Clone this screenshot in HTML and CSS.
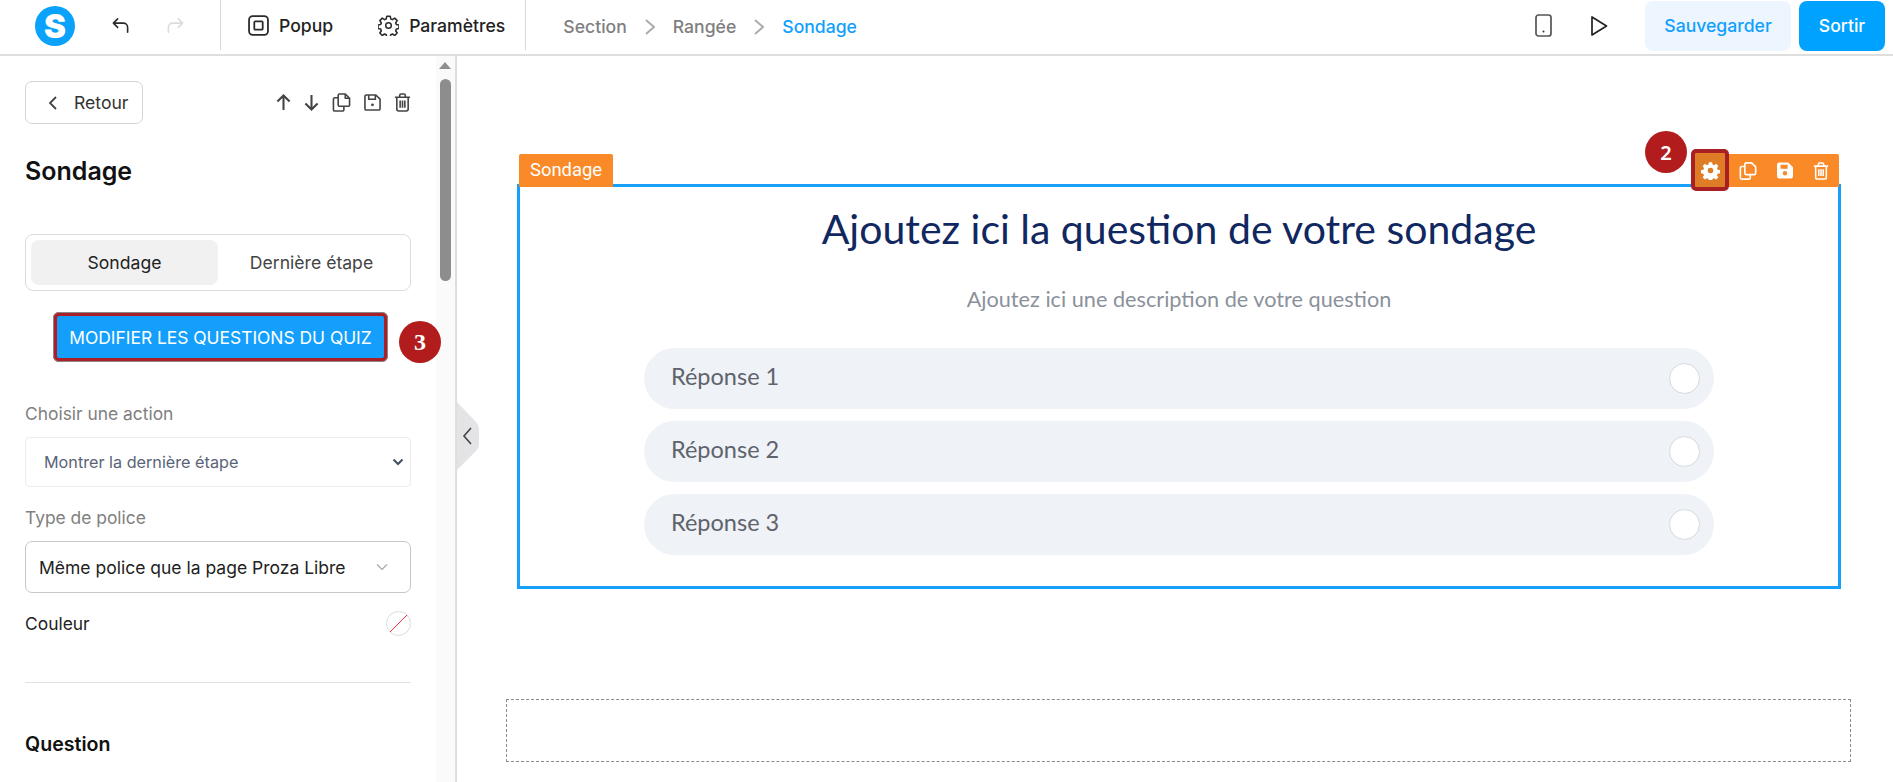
FILE: index.html
```html
<!DOCTYPE html>
<html lang="fr">
<head>
    <meta charset="UTF-8">
    <meta name="viewport" content="width=device-width, initial-scale=1.0">
    <title>Sondage</title>
    <link rel="stylesheet" href="styles.css">
</head>
<body>
    <header class="topbar">
        <div class="logo"><span>S</span></div>
        <div class="history">
            <svg class="ico ico-small" viewBox="0 0 20 20"><path d="M7 3 2.500 7.500 7 12M2.500 7.500H13a4.500 4.500 0 0 1 4.500 4.500v5"/></svg>
            <svg class="ico ico-small ico-off" viewBox="0 0 20 20"><path d="M13 3l4.500 4.500L13 12M17.500 7.500H7A4.500 4.500 0 0 0 2.500 12v5"/></svg>
        </div>
        <nav class="tools">
            <a class="tool"><svg class="ico" viewBox="0 0 20 20"><rect x="1" y="1" width="18" height="18" rx="3.500"/><rect x="6" y="6" width="8" height="8" rx="1"/></svg>Popup</a>
            <a class="tool"><svg class="ico" viewBox="0 0 24 24"><circle cx="12" cy="12" r="3.200"/><path d="M10 1.500h4l.6 3 1.900.8 2.600-1.700 2.800 2.800-1.700 2.600.8 1.900 3 .6v4l-3 .6-.8 1.900 1.700 2.600-2.800 2.800-2.600-1.700-1.900.8-.6 3h-4l-.6-3-1.900-.8-2.600 1.700-2.800-2.800 1.700-2.600-.8-1.900-3-.6v-4l3-.6.800-1.900-1.700-2.600 2.800-2.800 2.600 1.700 1.900-.8z" stroke-width="1.800"/></svg>Paramètres</a>
        </nav>
        <div class="crumbs">
            <span>Section</span>
            <svg class="crumb-sep" viewBox="1 0 10 16"><path d="M2 1l8 7-8 7"/></svg>
            <span>Rangée</span>
            <svg class="crumb-sep" viewBox="1 0 10 16"><path d="M2 1l8 7-8 7"/></svg>
            <span class="crumb-on">Sondage</span>
        </div>
        <div class="actions">
            <svg class="ico ico-phone" viewBox="0 0 17 23"><rect x="1" y="1" width="15" height="21" rx="2.500"/><circle class="dot" cx="8.500" cy="17.500" r="1"/></svg>
            <svg class="ico ico-play" viewBox="0 0 18 22"><path d="M2 2v18l14.500-9z"/></svg>
            <button class="btn btn-soft">Sauvegarder</button>
            <button class="btn btn-main">Sortir</button>
        </div>
    </header>

    <div class="main">
        <aside class="sidebar">
            <div class="panel">
                <div class="panel-head">
                    <button class="back"><svg viewBox="0 0 10 16"><path d="M8 2 2 8l6 6"/></svg>Retour</button>
                    <div class="panel-tools">
                        <svg class="pt-arrow" viewBox="0 0 16 18"><path d="M8 17V2M1.500 8 8 1.500 14.500 8"/></svg>
                        <svg class="pt-arrow" viewBox="0 0 16 18"><path d="M8 1v15M1.500 10 8 16.500 14.500 10"/></svg>
                        <svg class="pt-copy" viewBox="0 0 20 20"><path d="M6.500 5H3a1.500 1.500 0 0 0-1.500 1.500v11A1.500 1.500 0 0 0 3 19h8a1.500 1.500 0 0 0 1.500-1.500V14M6.500 2.500A1.500 1.500 0 0 1 8 1h6l4.500 4.500v7A1.500 1.500 0 0 1 17 14H8a1.500 1.500 0 0 1-1.500-1.500zM14 1v4.500h4.500"/></svg>
                        <svg class="pt-box" viewBox="0 0 18 18"><path d="M2.500 1h10L17 5.500v10a1.500 1.500 0 0 1-1.500 1.500h-13A1.500 1.500 0 0 1 1 15.500v-13A1.500 1.500 0 0 1 2.500 1zM5 1v4.500h7V1"/><circle class="dot" cx="9" cy="11.500" r="1.500"/></svg>
                        <svg class="pt-box" viewBox="0 0 18 20"><path d="M1 4.500h16M6 4.500V2.500A1.500 1.500 0 0 1 7.500 1h3A1.500 1.500 0 0 1 12 2.500v2M3 4.500V17a2 2 0 0 0 2 2h8a2 2 0 0 0 2-2V4.500M6.500 8v7.500M9 8v7.500M11.500 8v7.500"/></svg>
                    </div>
                </div>

                <h2 class="panel-title">Sondage</h2>

                <div class="tabs">
                    <div class="tab tab-on">Sondage</div>
                    <div class="tab">Dernière étape</div>
                </div>

                <div class="quiz-row">
                    <button class="quiz-btn">MODIFIER LES QUESTIONS DU QUIZ</button>
                    <span class="step step-3">3</span>
                </div>

                <label class="field-label">Choisir une action</label>
                <div class="select-plain">
                    <span>Montrer la dernière étape</span>
                    <svg viewBox="0 0 12 8"><path d="M1.500 1.500 6 6l4.500-4.500"/></svg>
                </div>

                <label class="field-label field-label-2">Type de police</label>
                <div class="select-font">
                    <span>Même police que la page Proza Libre</span>
                    <svg viewBox="0 0 12 8"><path d="M1 1.500 6 6.500l5-5"/></svg>
                </div>

                <div class="color-row">
                    <span>Couleur</span>
                    <svg class="swatch" viewBox="0 0 25 25"><circle cx="12.500" cy="12.500" r="12"/><path d="M4 21 21 4"/></svg>
                </div>

                <hr class="divider">
                <h3 class="section-title">Question</h3>
            </div>
            <div class="scrollbar">
                <div class="scroll-up"></div>
                <div class="scroll-thumb"></div>
            </div>
        </aside>

        <section class="canvas">
            <svg class="collapse" viewBox="0 0 22 68"><path class="collapse-bg" d="M0 0l19 20q3 3 3 7v15q0 4-3 7L0 68z"/><path class="collapse-arrow" d="M14 26l-7 8 7 8"/></svg>

            <div class="block">
                <div class="block-bar">
                    <div class="block-tag">Sondage</div>
                    <div class="block-tools">
                        <span class="step step-2">2</span>
                        <span class="gear-box"><svg viewBox="0 0 24 24"><path fill-rule="evenodd" d="M10 1.500h4l.6 3 1.900.8 2.600-1.700 2.800 2.800-1.700 2.600.8 1.900 3 .6v4l-3 .6-.8 1.900 1.700 2.600-2.800 2.800-2.600-1.700-1.900.8-.6 3h-4l-.6-3-1.900-.8-2.600 1.700-2.800-2.800 1.700-2.600-.8-1.900-3-.6v-4l3-.6.800-1.900-1.700-2.600 2.800-2.800 2.600 1.700 1.900-.8zM12 8.500a3.500 3.500 0 1 0 0 7 3.500 3.500 0 0 0 0-7z"/></svg></span>
                        <svg class="bar-ico" viewBox="0 0 20 20"><path d="M6.500 5H3a1.500 1.500 0 0 0-1.500 1.500v11A1.500 1.500 0 0 0 3 19h8a1.500 1.500 0 0 0 1.500-1.500V14M6.500 2.500A1.500 1.500 0 0 1 8 1h6l4.500 4.500v7A1.500 1.500 0 0 1 17 14H8a1.500 1.500 0 0 1-1.500-1.500z"/></svg>
                        <svg class="bar-ico bar-fill" viewBox="0 0 18 18"><path fill-rule="evenodd" d="M2.500 0h10.200L18 5.300v10.200a2.500 2.500 0 0 1-2.500 2.500h-13A2.500 2.500 0 0 1 0 15.500v-13A2.500 2.500 0 0 1 2.500 0zM4 2.500V7h8V2.500zM9 9.500a2.500 2.500 0 1 0 0 5 2.500 2.500 0 0 0 0-5z"/></svg>
                        <svg class="bar-ico bar-trash" viewBox="0 0 18 20"><path d="M1 4.500h16M6 4.500V2.500A1.500 1.500 0 0 1 7.500 1h3A1.500 1.500 0 0 1 12 2.500v2M3 4.500V17a2 2 0 0 0 2 2h8a2 2 0 0 0 2-2V4.500M6.500 8v7.500M9 8v7.500M11.500 8v7.500"/></svg>
                    </div>
                </div>
                <div class="survey">
                    <h1 class="survey-q">Ajoutez ici la question de votre sondage</h1>
                    <p class="survey-desc">Ajoutez ici une description de votre question</p>
                    <div class="answers">
                        <div class="answer"><span>Réponse 1</span><i class="radio"></i></div>
                        <div class="answer"><span>Réponse 2</span><i class="radio"></i></div>
                        <div class="answer"><span>Réponse 3</span><i class="radio"></i></div>
                    </div>
                </div>
            </div>

            <div class="dropzone"></div>
        </section>
    </div>
</body>
</html>
```

FILE: styles.css
```css
* {
    box-sizing: border-box;
}
html, body {
    height: 100%;
}
body {
    margin: 0;
    font-family: Inter, "Liberation Sans", sans-serif;
    color: #222;
    background: #fff;
    overflow: hidden;
}
svg {
    display: block;
}
button {
    font-family: inherit;
    cursor: pointer;
}
.ico {
    fill: none;
    stroke: #2b2b2b;
    stroke-width: 1.7;
    stroke-linecap: round;
    stroke-linejoin: round;
    width: 21px;
    height: 21px;
    flex: none;
}
.ico-small {
    width: 19px;
    height: 19px;
}
.ico-off {
    stroke: #dcdcdc;
}
.dot {
    fill: currentColor;
    stroke: none;
}

/* top bar */
.topbar {
    display: flex;
    align-items: center;
    height: 56px;
    border-bottom: 2px solid #dedede;
}
.logo {
    width: 40px;
    height: 40px;
    margin-left: 35px;
    margin-top: -2px;
    border-radius: 50%;
    background: #0ba2fb;
    color: #fff;
    display: flex;
    align-items: center;
    justify-content: center;
    font-weight: 900;
    font-size: 33px;
    line-height: 1;
}
.history {
    display: flex;
    gap: 36px;
    margin-left: 36px;
    padding-right: 35px;
    height: 50px;
    align-items: center;
    border-right: 1px solid #d8d8d8;
    margin-top: -4px;
}
.tools {
    display: flex;
    gap: 45px;
    height: 50px;
    align-items: center;
    padding: 0 20px 0 27px;
    border-right: 1px solid #d8d8d8;
    margin-top: -4px;
}
.tool {
    display: flex;
    align-items: center;
    gap: 10px;
    font-size: 17.600px;
    font-weight: 500;
    color: #222;
}
.crumbs {
    display: flex;
    align-items: center;
    gap: 18px;
    margin-left: 37px;
    font-size: 17.600px;
    font-weight: 500;
    color: #808080;
    margin-top: -1px;
}
.crumb-sep {
    width: 10px;
    height: 16px;
    fill: none;
    stroke: #a9acb0;
    stroke-width: 2;
}
.crumb-on {
    color: #12a0ff;
}
.actions {
    margin-left: auto;
    display: flex;
    align-items: center;
    padding-right: 8px;
    margin-top: -3px;
}
.ico-phone {
    width: 17px;
    height: 23px;
    color: #333;
    stroke: #555;
}
.ico-play {
    width: 18px;
    height: 22px;
    margin-left: 38px;
    stroke: #222;
}
.btn {
    border: 0;
    height: 50px;
    border-radius: 8px;
    font-size: 17.600px;
    font-weight: 500;
}
.btn-soft {
    width: 146px;
    margin-left: 37px;
    background: #edf6fe;
    color: #12a0ff;
}
.btn-main {
    width: 86px;
    margin-left: 8px;
    background: #00a2ff;
    color: #fff;
}

/* layout */
.main {
    display: flex;
    height: calc(100vh - 56px);
}
.sidebar {
    width: 457px;
    flex: none;
    display: flex;
    border-right: 2px solid #dedede;
    overflow: hidden;
}
.panel {
    flex: 1;
    padding: 25px 25px 0;
}
.scrollbar {
    width: 19px;
    flex: none;
    background: #fafafa;
    padding: 6px 0 0 4px;
}
.scroll-up {
    width: 0;
    height: 0;
    margin-left: -1px;
    border-left: 6px solid transparent;
    border-right: 6px solid transparent;
    border-bottom: 7px solid #8f8f8f;
}
.scroll-thumb {
    width: 11px;
    height: 202px;
    margin-top: 10px;
    border-radius: 6px;
    background: #8d8d8d;
}

/* panel */
.panel-head {
    display: flex;
    align-items: center;
    justify-content: space-between;
}
.back {
    display: flex;
    align-items: center;
    gap: 16px;
    width: 118px;
    height: 43px;
    padding-left: 22px;
    border: 1px solid #d5d5d5;
    border-radius: 7px;
    background: #fff;
    font-size: 17.600px;
    color: #333;
}
.back svg {
    width: 10px;
    height: 16px;
    fill: none;
    stroke: #444;
    stroke-width: 1.8;
}
.panel-tools {
    display: flex;
    align-items: center;
    gap: 13px;
    color: #444;
}
.panel-tools svg {
    height: 19px;
    fill: none;
    stroke: #444;
    stroke-width: 1.7;
}
.panel-tools .pt-arrow {
    width: 15px;
    stroke-width: 2.200;
}
.pt-copy {
    width: 19px;
}
.pt-box {
    width: 17px;
}
.panel-title {
    margin: 32px 0 0;
    font-size: 25px;
    line-height: 30px;
    font-weight: 600;
    color: #111;
}
.tabs {
    display: flex;
    height: 57px;
    margin-top: 48px;
    padding: 5px;
    border: 1px solid #dcdcdc;
    border-radius: 8px;
}
.tab {
    width: 187px;
    display: flex;
    align-items: center;
    justify-content: center;
    font-size: 17.600px;
    color: #444;
    border-radius: 8px;
}
.tab-on {
    background: #f1f1f1;
    color: #222;
}
.quiz-row {
    position: relative;
    margin-top: 21px;
    padding-left: 28px;
}
.quiz-btn {
    display: block;
    width: 335px;
    height: 50px;
    border: 4px solid #ab1f25;
    border-radius: 6px;
    outline: 1px solid #888;
    outline-offset: -1px;
    background: #149ffc;
    color: #fff;
    font-size: 17.400px;
    font-weight: 400;
    padding: 0;
    white-space: nowrap;
}
.step {
    position: absolute;
    width: 42px;
    height: 42px;
    border-radius: 50%;
    background: #b21c1c;
    color: #fff;
    font-family: "Liberation Serif", serif;
    font-weight: 700;
    font-size: 24px;
    display: flex;
    align-items: center;
    justify-content: center;
}
.step-3 {
    left: 374px;
    top: 9px;
}
.field-label {
    display: block;
    margin-top: 42px;
    font-size: 17.400px;
    line-height: 20px;
    color: #808080;
}
.field-label-2 {
    margin-top: 21px;
}
.select-plain {
    display: flex;
    align-items: center;
    justify-content: space-between;
    height: 50px;
    margin-top: 13px;
    padding: 0 6px 0 18px;
    border: 1px solid #ececec;
    border-radius: 4px;
    font-size: 16.200px;
    color: #5a6478;
}
.select-plain svg {
    width: 12px;
    height: 8px;
    fill: none;
    stroke: #444f63;
    stroke-width: 2;
}
.select-font {
    display: flex;
    align-items: center;
    justify-content: space-between;
    height: 52px;
    margin-top: 13px;
    padding: 0 22px 0 13px;
    border: 1px solid #c8c8c8;
    border-radius: 7px;
    font-size: 17.500px;
    color: #222;
}
.select-font svg {
    width: 12px;
    height: 8px;
    fill: none;
    stroke: #a9a9a9;
    stroke-width: 1.2;
}
.color-row {
    display: flex;
    align-items: center;
    justify-content: space-between;
    margin-top: 18px;
    font-size: 17.400px;
    color: #222;
}
.swatch {
    width: 25px;
    height: 25px;
    fill: none;
    stroke: #dcdcdc;
}
.swatch path {
    stroke: #ee3344;
}
.divider {
    border: 0;
    border-top: 1px solid #e2e2e2;
    margin: 46px 0 0;
}
.section-title {
    margin: 50px 0 0;
    font-size: 19.600px;
    line-height: 22px;
    font-weight: 600;
    color: #111;
}

/* canvas */
.canvas {
    position: relative;
    flex: 1;
    padding: 98px 41px 0 60px;
}
.collapse {
    position: absolute;
    left: 0;
    top: 346px;
    width: 22px;
    height: 68px;
}
.collapse-bg {
    fill: #e4e4e6;
}
.collapse-arrow {
    fill: none;
    stroke: #444;
    stroke-width: 1.6;
}
.block {
    width: 1324px;
}
.block-bar {
    display: flex;
    justify-content: space-between;
    height: 30px;
    padding: 0 2px;
}
.block-tag {
    height: 33px;
    width: 94px;
    background: #f98a27;
    color: #fff;
    font-family: Roboto, sans-serif;
    font-size: 18.400px;
    line-height: 32px;
    text-align: center;
    border-radius: 2px 2px 0 0;
    position: relative;
    z-index: 1;
}
.block-tools {
    position: relative;
    z-index: 1;
    display: flex;
    align-items: center;
    gap: 20px;
    width: 148px;
    height: 33px;
    padding-left: 48px;
    background: #f98a27;
    border-radius: 2px 2px 0 0;
}
.bar-ico {
    width: 18px;
    height: 20px;
    fill: none;
    stroke: #fff;
    stroke-width: 1.8;
    flex: none;
}
.bar-fill {
    fill: #fff;
    stroke: none;
    height: 17px;
    width: 16px;
}
.bar-trash {
    width: 16px;
}
.gear-box {
    position: absolute;
    left: 0;
    top: -5px;
    width: 38px;
    height: 42px;
    border: 4px solid #a81f24;
    border-radius: 5px;
    background: #df7c26;
    display: flex;
    align-items: center;
    justify-content: center;
}
.gear-box svg {
    width: 19px;
    height: 19px;
    fill: #fff;
}
.step-2 {
    left: -46px;
    top: -23px;
    font-family: "Noto Sans", sans-serif;
    font-weight: 600;
    font-size: 20px;
}
.survey {
    height: 405px;
    border: 3px solid #16a0fb;
    padding-top: 16px;
    text-align: center;
}
.survey-q {
    margin: 0;
    font-family: Lato, sans-serif;
    font-weight: 400;
    font-size: 41px;
    line-height: 52px;
    color: #10275f;
}
.survey-desc {
    margin: 30px 0 0;
    font-family: Lato, sans-serif;
    font-size: 21.700px;
    line-height: 28px;
    color: #8b919b;
}
.answers {
    width: 1070px;
    margin: 35px auto 0;
    display: flex;
    flex-direction: column;
    gap: 12px;
}
.answer {
    display: flex;
    align-items: center;
    justify-content: space-between;
    height: 61px;
    padding: 0 14px 0 27px;
    border-radius: 31px;
    background: #eff2f7;
    font-family: Lato, sans-serif;
    font-size: 23.500px;
    color: #5e636c;
}
.answer span {
    padding-bottom: 5px;
}
.radio {
    width: 31px;
    height: 31px;
    border-radius: 50%;
    background: #fff;
    border: 1px solid #d5d8dd;
}
.dropzone {
    height: 63px;
    width: 1345px;
    margin: 110px 0 0 -11px;
    border: 1px dashed #8a8a8a;
}
```
